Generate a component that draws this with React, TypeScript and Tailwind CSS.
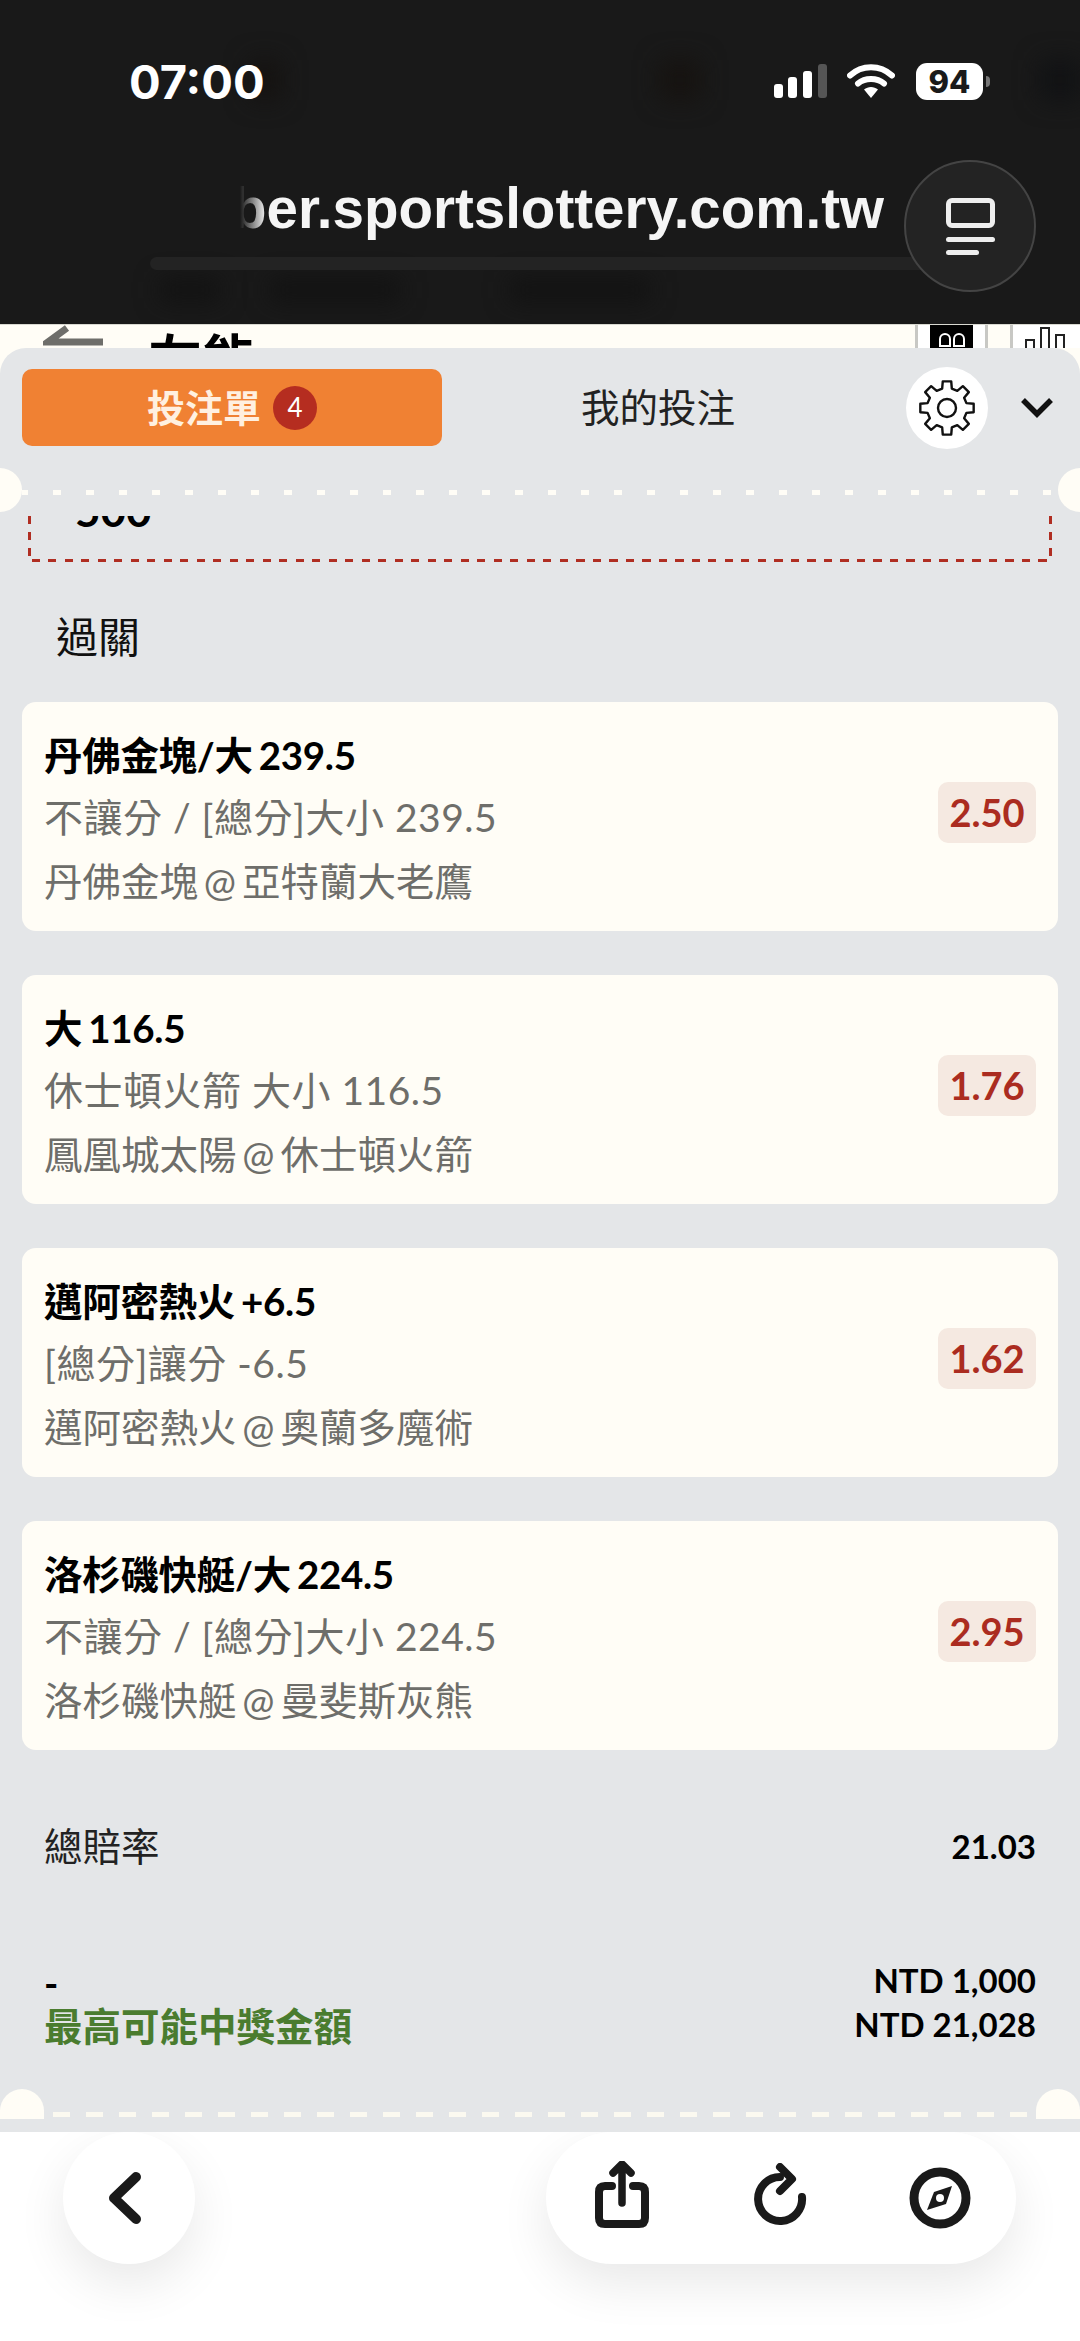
const cream = "bg-[#fffdf6]"

const gearPath = (() => {
  const cx = 30
  const cy = 30
  const pts: string[] = []
  const p = (r: number, deg: number) => {
    const a = (deg * Math.PI) / 180
    return `${(cx + r * Math.cos(a)).toFixed(2)} ${(cy + r * Math.sin(a)).toFixed(2)}`
  }
  for (let i = 0; i < 8; i++) {
    const c = i * 45 - 90
    pts.push(p(20, c - 14), p(27, c - 9), p(27, c + 9), p(20, c + 14))
  }
  return "M" + pts.join("L") + "Z"
})()

const bets = [
  { title: "丹佛金塊/大 239.5", market: "不讓分 / [總分]大小 239.5", match: "丹佛金塊 @ 亞特蘭大老鷹", odds: "2.50" },
  { title: "大 116.5", market: "休士頓火箭 大小 116.5", match: "鳳凰城太陽 @ 休士頓火箭", odds: "1.76" },
  { title: "邁阿密熱火 +6.5", market: "[總分]讓分 -6.5", match: "邁阿密熱火 @ 奧蘭多魔術", odds: "1.62" },
  { title: "洛杉磯快艇/大 224.5", market: "不讓分 / [總分]大小 224.5", match: "洛杉磯快艇 @ 曼斐斯灰熊", odds: "2.95" },
]

function BetCard({ title, market, match, odds }: (typeof bets)[number]) {
  return (
    <div className={`flex h-[229px] items-center justify-between rounded-[14px] ${cream} pl-[22px] pr-[22px]`}>
      <div className="pt-[3px] text-[39px] leading-[62px] text-[#6e6e6a]">
        <div className="text-[38.5px] font-bold tracking-[-0.3px] text-black [word-spacing:-3px]">{title}</div>
        <div className="tracking-[0.5px]">{market}</div>
        <div className="mt-[2px] text-[38.5px] [word-spacing:-4px]">{match}</div>
      </div>
      <div className="mb-[9px] flex h-[61px] w-[98px] items-center justify-center rounded-[10px] bg-[#f5e9e1] text-[38px] font-bold text-[#ab2c20]">
        {odds}
      </div>
    </div>
  )
}

function StatusBar() {
  return (
    <div className="flex h-[62px] items-center justify-between pl-[129px] pr-[90px] pt-[0px]">
      <span className="font-['Inter',sans-serif] text-[47px] font-bold leading-none text-white">07:00</span>
      <div className="flex items-center">
        <svg width="54" height="34" viewBox="0 0 54 34" className="block">
          <rect x="0" y="20" width="9" height="14" rx="3" fill="#fff" />
          <rect x="14" y="13" width="9" height="21" rx="3" fill="#fff" />
          <rect x="29" y="7" width="9" height="27" rx="3" fill="#fff" />
          <rect x="44" y="0" width="9" height="34" rx="3" fill="#555" />
        </svg>
        <svg width="48" height="34" viewBox="0 0 48 34" className="ml-[19px] block">
          <path d="M3 11.5C15 0.5 33 0.5 45 11.5" fill="none" stroke="#fff" strokeWidth="6" strokeLinecap="round" />
          <path d="M11 19.5C18 13.5 30 13.5 37 19.5" fill="none" stroke="#fff" strokeWidth="6" strokeLinecap="round" />
          <path d="M17 25.5C21 22 27 22 31 25.5L24 34Z" fill="#fff" />
        </svg>
        <div className="ml-[21px] flex h-[37px] w-[67px] items-center justify-center rounded-[11px] bg-white font-['Inter',sans-serif] text-[31px] font-extrabold leading-none text-[#1a1a1a]">
          94
        </div>
        <div className="ml-[3px] h-[11px] w-[4px] rounded-r-full bg-[#777]" />
      </div>
    </div>
  )
}

function BrowserBar() {
  return (
    <div className="relative h-[324px] overflow-hidden bg-[#191919]">
      {/* page behind the bar, blurred */}
      <div className="absolute left-[250px] top-[60px] h-[40px] w-[30px] bg-[#141210] blur-md" />
      <div className="absolute left-[660px] top-[60px] h-[40px] w-[40px] bg-[#161310] blur-md" />
      <div className="absolute left-[1040px] top-[60px] h-[40px] w-[40px] bg-[#111214] blur-md" />
      <div className="absolute left-[160px] top-[280px] h-[20px] w-[60px] bg-[#111] blur-md" />
      <div className="absolute left-[270px] top-[280px] h-[20px] w-[130px] bg-[#111] blur-md" />
      <div className="absolute left-[510px] top-[280px] h-[20px] w-[140px] bg-[#111] blur-md" />

      <div className="relative pt-[50px]">
        <StatusBar />
        <div className="ml-[240px] mt-[65px] h-[64px] w-[644px] overflow-hidden">
          <div className="relative flex justify-end whitespace-nowrap font-['Liberation_Sans',sans-serif] text-[56.5px] font-bold leading-[64px] text-[#f5f5f5]">
            ber.sportslottery.com.tw
            <div className="absolute inset-y-0 left-0 w-[26px] bg-gradient-to-r from-[#191919] to-transparent" />
          </div>
        </div>
        <div className="ml-[150px] mt-[16px] h-[13px] w-[790px] rounded-full bg-[#232323]" />
      </div>

      {/* tab overview button */}
      <div className="absolute left-[904px] top-[160px] flex h-[132px] w-[132px] flex-col items-center justify-center rounded-full border-2 border-[#444] bg-[#232323]">
        <div className="h-[30px] w-[49px] rounded-[6px] border-[5px] border-[#eee]" />
        <div className="mt-[9px] h-[5px] w-[49px] rounded-full bg-[#eee]" />
        <div className="mr-[15px] mt-[8px] h-[5px] w-[33px] rounded-full bg-[#eee]" />
      </div>
    </div>
  )
}

function PageBehind() {
  return (
    <div className={`flex h-[24px] items-start overflow-hidden border-t border-[#d8d8d0] ${cream}`}>
      <svg width="62" height="24" viewBox="0 0 62 24" className="ml-[43px] block shrink-0">
        <path d="M24 3L5 17H60" fill="none" stroke="#6e6e6a" strokeWidth="7" />
      </svg>
      <span className="ml-[43px] whitespace-nowrap text-[54px] font-bold leading-[70px] text-black">左能</span>
      <div className="ml-auto flex h-[24px] items-start">
        <div className="h-[24px] w-[3px] bg-[#c8c8c4]" />
        <div className="flex h-[24px] w-[67px] justify-center bg-white">
          <div className="flex h-[24px] w-[43px] items-end justify-center gap-[2px] bg-black pb-[2px]">
            <div className="h-[14px] w-[12px] rounded-t-full border-2 border-white" />
            <div className="h-[14px] w-[12px] rounded-t-full border-2 border-white" />
          </div>
        </div>
        <div className="h-[24px] w-[3px] bg-[#c8c8c4]" />
        <div className="w-[22px]" />
        <div className="h-[24px] w-[3px] bg-[#c8c8c4]" />
        <div className="flex h-[24px] w-[67px] items-end gap-[5px] bg-white pl-[12px]">
          <div className="h-[10px] w-[10px] border-2 border-b-0 border-[#222]" />
          <div className="h-[22px] w-[10px] border-2 border-b-0 border-[#222]" />
          <div className="h-[15px] w-[10px] border-2 border-b-0 border-[#222]" />
        </div>
      </div>
    </div>
  )
}

function TicketHeader() {
  return (
    <div className="flex h-[77px] items-center pl-[22px] pr-[25px]">
      <div className="flex h-[77px] w-[420px] items-center justify-center rounded-[10px] bg-[#f08133] text-[38px] font-bold text-[#fff0e0]">
        投注單
        <span className="ml-[12px] flex h-[44px] w-[44px] items-center justify-center rounded-full bg-[#b52d20] text-[26px] font-normal text-white">
          4
        </span>
      </div>
      <div className="flex-1 pr-[32px] text-center text-[38.5px] text-[#222]">我的投注</div>
      <div className="flex h-[82px] w-[82px] items-center justify-center rounded-full bg-white">
        <svg width="60" height="60" viewBox="0 0 60 60">
          <path d={gearPath} fill="none" stroke="#111" strokeWidth="2.4" strokeLinejoin="round" />
          <circle cx="30" cy="30" r="9" fill="none" stroke="#111" strokeWidth="2.4" />
        </svg>
      </div>
      <svg width="36" height="24" viewBox="0 0 36 24" className="ml-[31px] block">
        <path d="M4 4L18 18L32 4" fill="none" stroke="#111" strokeWidth="5.5" />
      </svg>
    </div>
  )
}

function BottomBar() {
  return (
    <div className="flex h-[209px] items-start justify-between overflow-hidden bg-white pl-[63px] pr-[64px]">
      <div className="flex h-[132px] w-[132px] items-center justify-center rounded-full bg-white shadow-[0_20px_50px_rgba(0,0,0,0.09)]">
        <svg width="132" height="132" viewBox="0 0 132 132" className="block">
          <path d="M73 45L51 66L73 87" fill="none" stroke="#1a1a1a" strokeWidth="10" strokeLinecap="round" strokeLinejoin="round" />
        </svg>
      </div>
      <div className="flex h-[132px] w-[470px] items-center rounded-full bg-white pl-[46px] shadow-[0_20px_50px_rgba(0,0,0,0.09)]">
        <svg width="60" height="74" viewBox="0 0 60 74" className="block">
          <path d="M20 25H13C9 25 7 27 7 31V57C7 61 9 63 13 63H47C51 63 53 61 53 57V31C53 27 51 25 47 25H41" fill="none" stroke="#1a1a1a" strokeWidth="8" strokeLinecap="round" />
          <path d="M30 42V4M21 12L30 3L39 12" fill="none" stroke="#1a1a1a" strokeWidth="7.5" strokeLinecap="round" strokeLinejoin="round" />
        </svg>
        <svg width="60" height="70" viewBox="0 0 60 70" className="ml-[101px] block">
          <path d="M49 34A22 22 0 1 1 27 14" fill="none" stroke="#1a1a1a" strokeWidth="8" strokeLinecap="round" />
          <path d="M27 4L39 16L27 28" fill="none" stroke="#1a1a1a" strokeWidth="8" strokeLinecap="round" strokeLinejoin="round" />
        </svg>
        <svg width="62" height="62" viewBox="0 0 62 62" className="ml-[96px] block">
          <circle cx="31" cy="31" r="26" fill="none" stroke="#1a1a1a" strokeWidth="9" />
          <path d="M43 19L37 37L18 43L25 25Z" fill="#1a1a1a" />
          <circle cx="31" cy="31" r="4" fill="#fff" />
        </svg>
      </div>
    </div>
  )
}

export default function App() {
  return (
    <div className="flex h-[2341px] w-[1080px] flex-col overflow-hidden bg-white font-['Lato','Noto_Sans_CJK_TC',sans-serif]">
      <BrowserBar />
      <PageBehind />

      <div className={cream}>
        <div className="relative h-[1784px] overflow-hidden rounded-t-[26px] bg-[#e4e6e8] pt-[21px]">
          <TicketHeader />

          <div className="relative mx-[22px] mt-[44px] h-[5px] bg-[repeating-linear-gradient(90deg,#fffdf6_0_6px,transparent_6px_31px,#fffdf6_31px_33px)]">
            <div className={`absolute -left-[44px] -top-[22px] h-[44px] w-[44px] rounded-full ${cream}`} />
            <div className={`absolute -right-[44px] -top-[22px] h-[44px] w-[44px] rounded-full ${cream}`} />
          </div>

          {/* selected bet, scrolled away under the header */}
          <div className="relative mx-[28px] mt-[21px] h-[46px] overflow-hidden">
            <div className="-mt-[28px] pl-[47px] text-[44px] font-bold leading-[44px] text-black">500</div>
            <div className="absolute inset-y-0 left-0 w-[3px] bg-[repeating-linear-gradient(180deg,#b02e22_0_8px,transparent_8px_16px)]" />
            <div className="absolute inset-y-0 right-0 w-[3px] bg-[repeating-linear-gradient(180deg,#b02e22_0_8px,transparent_8px_16px)]" />
            <div className="absolute inset-x-[4px] bottom-0 h-[3px] bg-[repeating-linear-gradient(90deg,#b02e22_0_8px,transparent_8px_16.5px)]" />
          </div>

          <div className="ml-[56px] mt-[50px] text-[42px] leading-[50px] text-[#111]">過關</div>

          <div className="mt-[40px] flex flex-col gap-[44px] px-[22px]">
            {bets.map((bet) => (
              <BetCard key={bet.title} {...bet} />
            ))}
          </div>

          <div className="mt-[72px] flex h-[50px] items-center justify-between px-[44px] text-[38.5px] text-[#222]">
            <span>總賠率</span>
            <span className="text-[33px] font-bold text-black">21.03</span>
          </div>

          <div className="mt-[86px] flex items-start justify-between pl-[44px] pr-[44px] font-bold">
            <div className="pt-[4px] text-[38.5px] leading-[43px]">
              <div className="text-black">-</div>
              <div className="text-[#4a7c2f]">最高可能中獎金額</div>
            </div>
            <div className="text-right text-[33px] leading-[44px] text-black">
              <div>NTD 1,000</div>
              <div>NTD 21,028</div>
            </div>
          </div>

          <div className="absolute inset-x-0 top-[1741px] flex items-start justify-between">
            <div className={`h-[30px] w-[44px] rounded-t-full ${cream}`} />
            <div className="mt-[23px] h-[5px] flex-1 bg-[repeating-linear-gradient(90deg,transparent_0_9px,#fbf9f0_9px_26px,transparent_26px_33px)]" />
            <div className={`h-[30px] w-[44px] rounded-t-full ${cream}`} />
          </div>
        </div>
      </div>

      <BottomBar />
    </div>
  )
}
